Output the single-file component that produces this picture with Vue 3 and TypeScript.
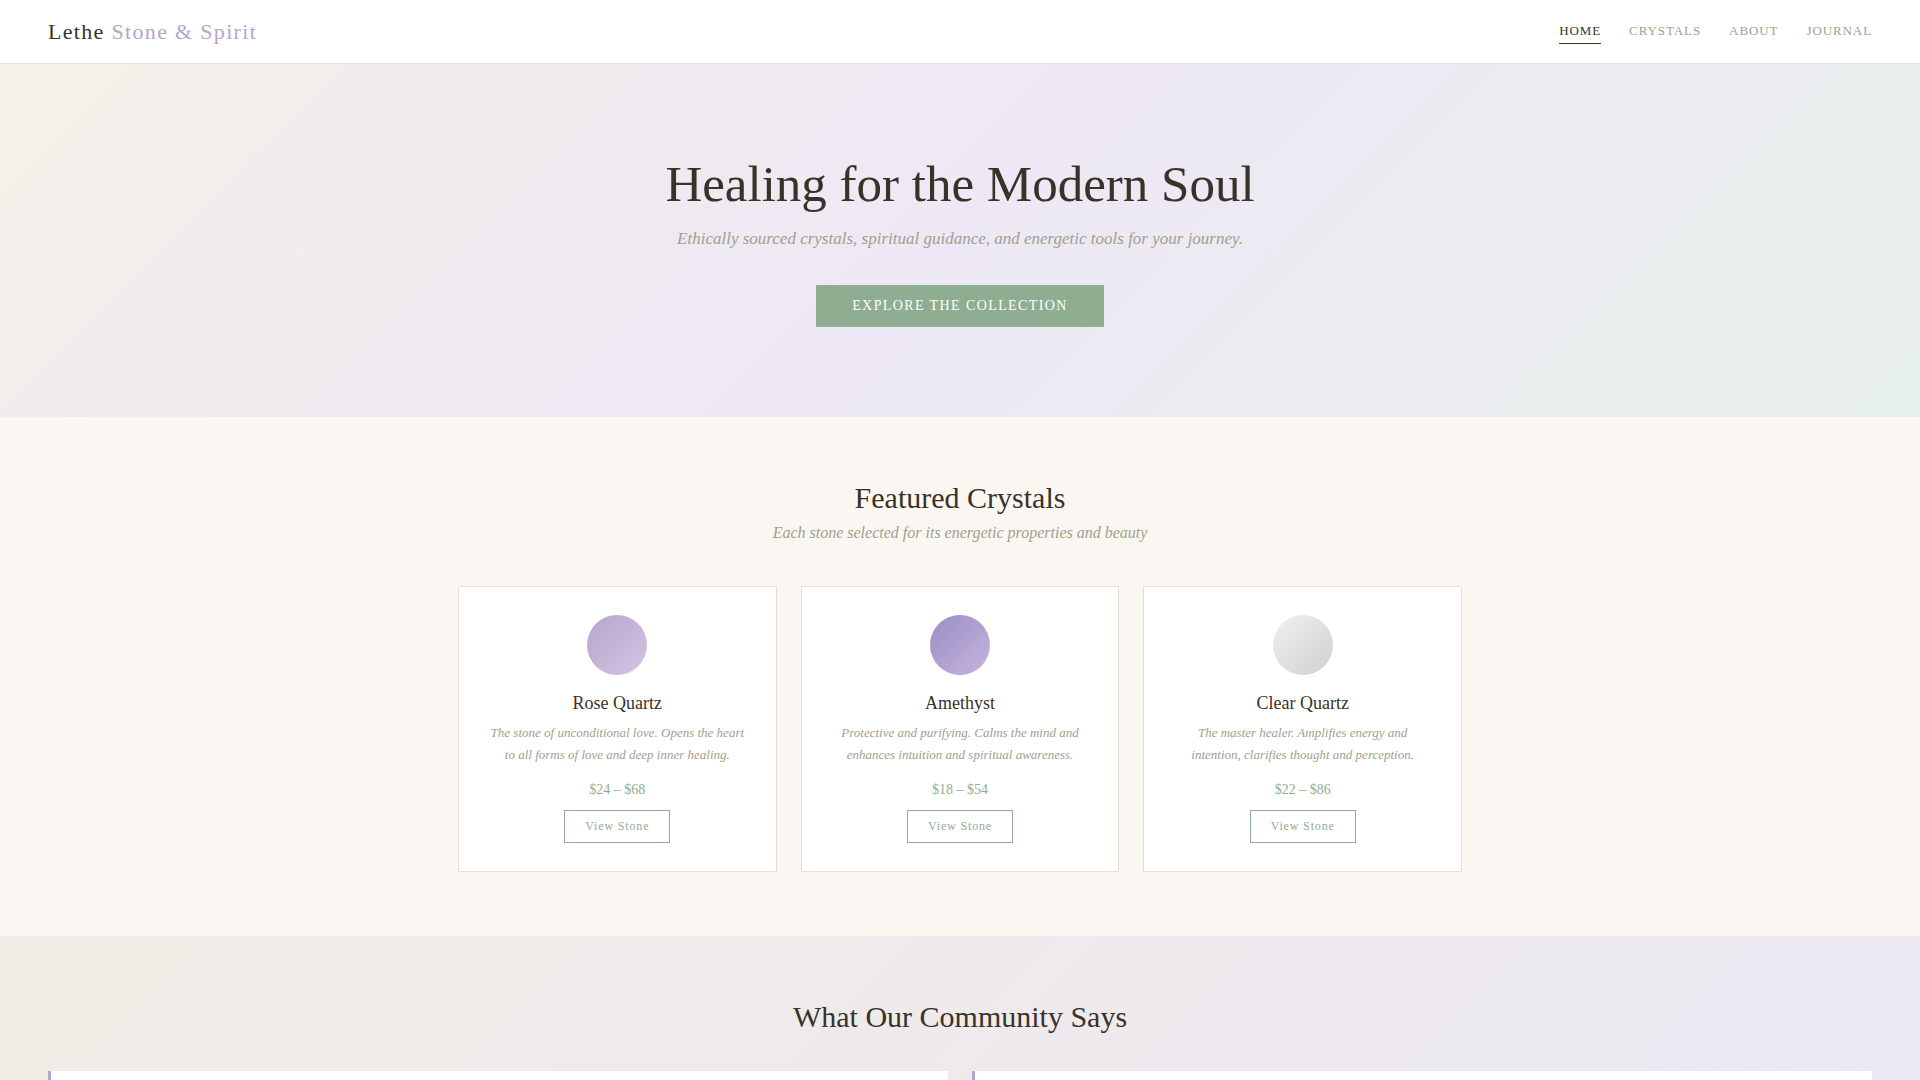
<script setup lang="ts">
interface NavLink {
  label: string
  href: string
  active?: boolean
}

interface Crystal {
  name: string
  tone: string
  description: string
  price: string
}

const links: NavLink[] = [
  { label: 'Home', href: '#home', active: true },
  { label: 'Crystals', href: '#crystals' },
  { label: 'About', href: '#about' },
  { label: 'Journal', href: '#journal' },
]

const crystals: Crystal[] = [
  {
    name: 'Rose Quartz',
    tone: 'rose',
    description:
      'The stone of unconditional love. Opens the heart to all forms of love and deep inner healing.',
    price: '$24 – $68',
  },
  {
    name: 'Amethyst',
    tone: 'amethyst',
    description:
      'Protective and purifying. Calms the mind and enhances intuition and spiritual awareness.',
    price: '$18 – $54',
  },
  {
    name: 'Clear Quartz',
    tone: 'clear',
    description:
      'The master healer. Amplifies energy and intention, clarifies thought and perception.',
    price: '$22 – $86',
  },
]
</script>

<template>
  <div class="page">
    <header class="header">
      <a class="logo" href="#home">Lethe <span class="logo-accent">Stone &amp; Spirit</span></a>
      <nav class="nav">
        <a
          v-for="link in links"
          :key="link.label"
          class="nav-link"
          :class="{ active: link.active }"
          :href="link.href"
          >{{ link.label }}</a
        >
      </nav>
    </header>

    <main>
      <section id="home" class="hero">
        <h1 class="hero-title">Healing for the Modern Soul</h1>
        <p class="hero-text">
          Ethically sourced crystals, spiritual guidance, and energetic tools for your journey.
        </p>
        <button class="hero-button" type="button">Explore the Collection</button>
      </section>

      <section id="crystals" class="featured">
        <h2 class="section-title">Featured Crystals</h2>
        <p class="section-text">Each stone selected for its energetic properties and beauty</p>
        <div class="cards">
          <article v-for="crystal in crystals" :key="crystal.name" class="card">
            <div class="stone" :class="crystal.tone"></div>
            <h3 class="card-title">{{ crystal.name }}</h3>
            <p class="card-text">{{ crystal.description }}</p>
            <p class="card-price">{{ crystal.price }}</p>
            <button class="card-button" type="button">View Stone</button>
          </article>
        </div>
      </section>

      <section class="community">
        <h2 class="section-title">What Our Community Says</h2>
        <div class="quotes">
          <article class="quote"></article>
          <article class="quote"></article>
        </div>
      </section>
    </main>
  </div>
</template>

<style>
body {
  margin: 0;
  background: #faf7f2;
}
</style>

<style scoped>
.page,
.page * {
  box-sizing: border-box;
}

.page {
  font-family: 'Liberation Serif', 'Times New Roman', serif;
  color: #3a3228;
}

h1,
h2,
h3,
p {
  margin: 0;
  font-weight: 400;
}

button {
  font-family: inherit;
  cursor: pointer;
}

.header {
  display: flex;
  align-items: center;
  justify-content: space-between;
  height: 64px;
  padding: 0 48px;
  background: #fff;
  border-bottom: 1px solid #e8ddd4;
}

.logo {
  font-size: 22px;
  line-height: 26px;
  letter-spacing: 0.06em;
  color: #3a3228;
  text-decoration: none;
}

.logo-accent {
  color: #b8a4cc;
}

.nav {
  display: flex;
  gap: 28px;
}

.nav-link {
  border-bottom: 1px solid transparent;
  font-size: 13px;
  line-height: 24px;
  letter-spacing: 0.07em;
  text-transform: uppercase;
  text-decoration: none;
  color: #a09f8e;
}

.nav-link.active {
  color: #3a3228;
  border-bottom-color: #3a3228;
}

.hero {
  padding: 90px 48px;
  text-align: center;
  background: linear-gradient(135deg, #f5f0e8 0%, #ede8f5 50%, #e8f0ea 100%);
}

.hero-title {
  margin-bottom: 14px;
  font-size: 51px;
  line-height: 60px;
}

.hero-text {
  margin-bottom: 35px;
  font-size: 17px;
  line-height: 22px;
  font-style: italic;
  color: #a09f8e;
}

.hero-button {
  display: block;
  margin: 0 auto;
  padding: 13px 36px;
  border: 0;
  background: #8fad91;
  color: #fff;
  font-size: 14px;
  line-height: 16px;
  letter-spacing: 0.1em;
  text-transform: uppercase;
}

.featured {
  max-width: 1100px;
  margin: 0 auto;
  padding: 64px 48px;
  text-align: center;
}

.section-title {
  font-size: 30px;
  line-height: 34px;
}

.section-text {
  margin-top: 8px;
  font-size: 16px;
  line-height: 20px;
  font-style: italic;
  color: #a09f8e;
}

.cards {
  display: grid;
  grid-template-columns: repeat(3, 1fr);
  gap: 24px;
  margin-top: 43px;
}

.card {
  padding: 28px;
  border: 1px solid #e8dfd2;
  background: #fff;
}

.stone {
  width: 60px;
  height: 60px;
  margin: 0 auto 16px;
  border-radius: 50%;
}

.stone.rose {
  background: linear-gradient(135deg, #b8a4cc, #d4c4e4);
}

.stone.amethyst {
  background: linear-gradient(135deg, #9b8ec4, #c4b4dc);
}

.stone.clear {
  background: linear-gradient(135deg, #f0f0f0, #d0d0d0);
}

.card-title {
  margin-bottom: 7px;
  font-size: 18px;
  line-height: 24px;
}

.card-text {
  margin-bottom: 14px;
  font-size: 13px;
  line-height: 22px;
  font-style: italic;
  color: #a09f8e;
}

.card-price {
  margin-bottom: 10px;
  font-size: 14px;
  line-height: 20px;
  color: #8fad91;
}

.card-button {
  display: block;
  margin: 0 auto;
  padding: 8px 20px;
  border: 1px solid #8fad91;
  background: transparent;
  color: #8fad91;
  font-size: 12px;
  line-height: 15px;
  letter-spacing: 0.07em;
}

.community {
  padding: 64px 48px;
  text-align: center;
  background: linear-gradient(135deg, #f0ede6 0%, #ebe7f4 100%);
}

.quotes {
  display: grid;
  grid-template-columns: repeat(2, 1fr);
  gap: 24px;
  margin-top: 37px;
}

.quote {
  min-height: 150px;
  border-left: 3px solid #b8a4cc;
  background: #fff;
}
</style>
